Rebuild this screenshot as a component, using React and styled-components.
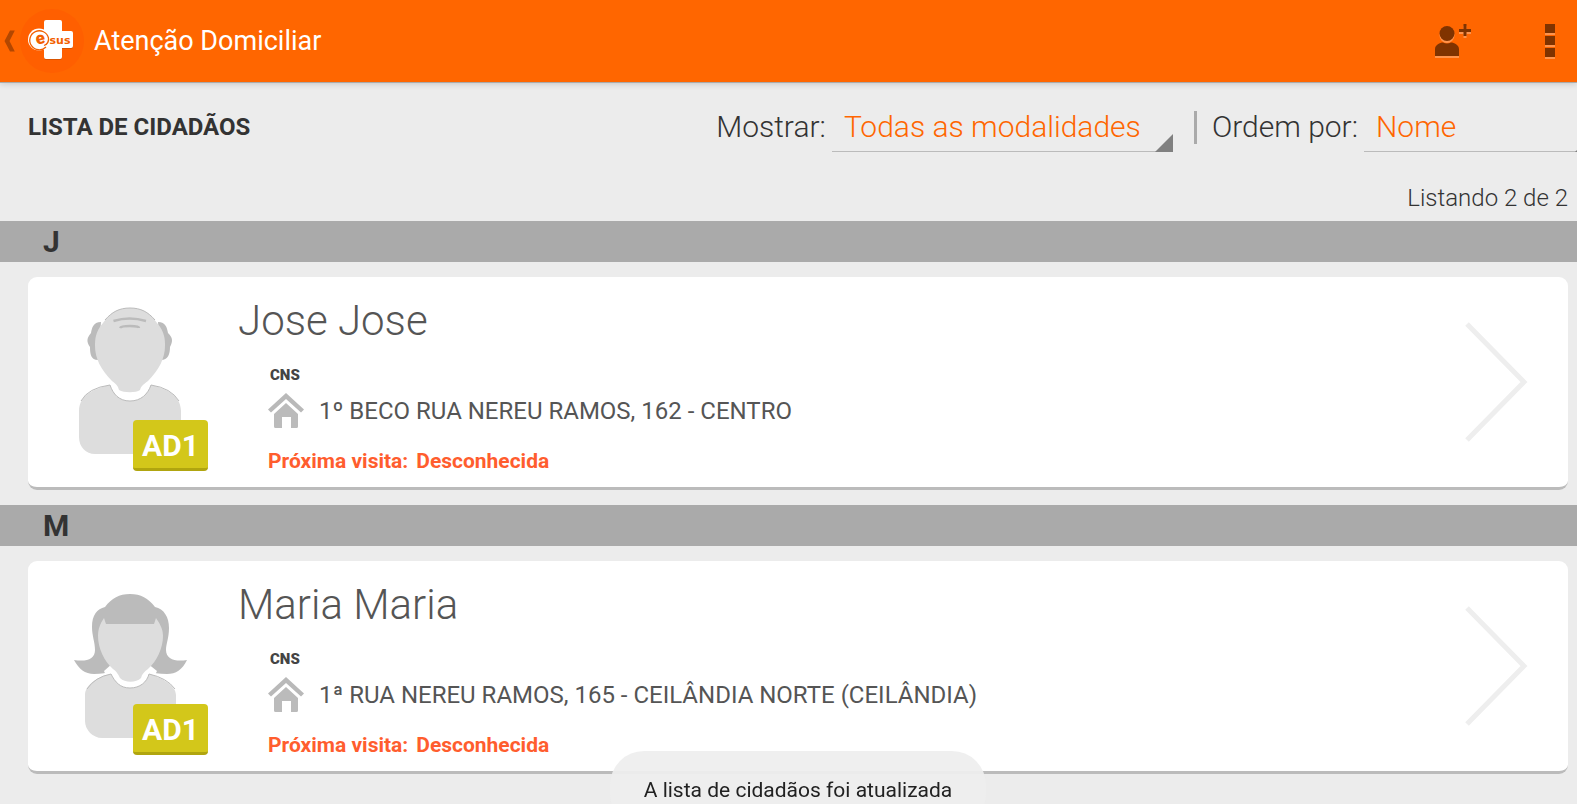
import React from "react";
import styled, { createGlobalStyle } from "styled-components";

const GlobalStyle = createGlobalStyle`
  *, *::before, *::after { box-sizing: border-box; }
  body {
    margin: 0;
    background: #ececec;
    color: #333;
    font-family: Roboto, "Liberation Sans", sans-serif;
  }
  h1, h2, h3, p, ul { margin: 0; padding: 0; }
  button, select { font: inherit; }
`;

const Page = styled.div`
  min-height: 100vh;
  overflow-x: clip;
`;

const AppBar = styled.header`
  display: flex;
  align-items: center;
  height: 82px;
  background: #ff6600;
  box-shadow: 0 1px 0 #aaa, 0 2px 6px rgba(0, 0, 0, 0.16);
`;

const HomeButton = styled.button`
  display: flex;
  align-items: center;
  padding: 0;
  border: 0;
  background: none;
`;

const BarTitle = styled.h1`
  flex: 1;
  margin-left: 10px;
  color: #fff;
  font-size: 27px;
  font-weight: 400;
  line-height: 32px;
`;

const BarAction = styled.button`
  display: flex;
  align-items: center;
  justify-content: center;
  width: ${(p) => p.$width};
  height: 80px;
  padding: 0;
  border: 0;
  background: none;
`;

const BarActions = styled.div`
  display: flex;
  gap: 22px;
`;

const Toolbar = styled.section`
  display: flex;
  justify-content: space-between;
  align-items: center;
  padding: 20px 0 0 28px;
`;

const PageTitle = styled.h2`
  color: #333;
  font-size: 24px;
  font-weight: 700;
  line-height: 50px;
  white-space: nowrap;
`;

const Filters = styled.div`
  display: flex;
  align-items: center;
  margin-right: -16px;
`;

const Field = styled.label`
  display: flex;
  align-items: center;
  gap: 6px;
  font-size: 30px;
  font-weight: 300;
  line-height: 50px;
  white-space: nowrap;
`;

const SpinnerBox = styled.span`
  position: relative;
  display: flex;
  width: ${(p) => p.$width};
  border-bottom: 1px solid #bbb;

  &::after {
    content: "";
    position: absolute;
    right: 0;
    bottom: -1px;
    border-left: 18px solid transparent;
    border-bottom: 18px solid #808080;
    pointer-events: none;
  }
`;

const Spinner = styled.select`
  appearance: none;
  width: 100%;
  height: 49px;
  padding: 0 12px;
  border: 0;
  background: none;
  color: #ff6600;
`;

const Divider = styled.span`
  width: 3px;
  height: 33px;
  margin: 0 15px 0 21px;
  background: #aaa;
`;

const Count = styled.p`
  padding: 28px 9px 5px;
  font-size: 24px;
  font-weight: 300;
  line-height: 36px;
  text-align: right;
`;

const GroupHeader = styled.h2`
  padding: 1px 0 0 43px;
  background: #aaa;
  color: #333;
  font-size: 30px;
  font-weight: 700;
  line-height: 40px;
`;

const GroupList = styled.ul`
  padding: 15px 9px 15px 28px;
  list-style: none;
`;

const Card = styled.a`
  display: flex;
  align-items: center;
  height: 213px;
  padding-right: 40px;
  border-bottom: 3px solid #bbb;
  border-radius: 9px;
  background: #fff;
  color: #555;
  text-decoration: none;
`;

const Portrait = styled.div`
  position: relative;
  align-self: stretch;
  width: 210px;
  padding: 27px 0 0 44px;
`;

const Badge = styled.span`
  position: absolute;
  left: 105px;
  top: 143px;
  width: 75px;
  height: 51px;
  border-bottom: 3px solid #b0a50f;
  border-radius: 4px;
  background: #d3c71a;
  color: #fff;
  font-size: 30px;
  font-weight: 700;
  line-height: 52px;
  text-align: center;
`;

const Details = styled.div`
  flex: 1;
  align-self: stretch;
  padding-top: 18px;
`;

const Name = styled.h3`
  font-size: 42px;
  font-weight: 300;
  line-height: 52px;
`;

const Facts = styled.div`
  display: flex;
  flex-direction: column;
  padding: 18px 0 0 30px;
`;

const Cns = styled.p`
  padding-left: 2px;
  color: #444;
  font-size: 15px;
  font-weight: 900;
  line-height: 20px;
`;

const Address = styled.p`
  display: flex;
  align-items: center;
  gap: 15px;
  padding-top: 6px;
  font-size: 24px;
  line-height: 40px;
`;

const NextVisit = styled.p`
  display: flex;
  gap: 8px;
  padding-top: 17px;
  color: #ff5d2e;
  font-size: 21px;
  font-weight: 700;
  line-height: 26px;
`;

const ToastArea = styled.div`
  position: fixed;
  left: 28px;
  right: 9px;
  bottom: -24px;
  display: flex;
  justify-content: center;
  pointer-events: none;
`;

const Toast = styled.div`
  padding: 1px 34px 0;
  border-radius: 34px;
  background: rgba(238, 238, 238, 0.94);
  color: #222;
  font-size: 21px;
  line-height: 76px;
  white-space: nowrap;
`;

function BackIcon() {
  return (
    <svg width="20" height="80" viewBox="0 0 20 80" aria-hidden="true">
      <path d="M10 29.500h4.800L9.500 40l5.300 10.500H10L4.500 40z" fill="#b34700" />
    </svg>
  );
}

function Logo() {
  return (
    <svg width="64" height="64" viewBox="20 8 64 64" aria-hidden="true">
      <circle cx="52" cy="40" r="32" fill="#ff5f00" />
      <path d="M46 20h14a2 2 0 0 1 2 2v9h9a2 2 0 0 1 2 2v13a2 2 0 0 1-2 2h-9v9a2 2 0 0 1-2 2H46a2 2 0 0 1-2-2V21a2 2 0 0 1 2-2z" fill="#b34700" opacity=".5" />
      <path d="M46 19h14a2 2 0 0 1 2 2v9h9a2 2 0 0 1 2 2v13a2 2 0 0 1-2 2h-9v9a2 2 0 0 1-2 2H46a2 2 0 0 1-2-2V21a2 2 0 0 1 2-2z" fill="#fff" />
      <circle cx="39" cy="38.500" r="11" fill="#fff" />
      <path d="M46 46a9.500 9.500 0 1 1 2.500-9c.4 4-1.500 6.500-4.500 7.500" fill="none" stroke="#f26000" strokeWidth="1.300" />
      <text x="35.500" y="43" fontSize="17" fontWeight="900" fill="#f26000" fontFamily="Roboto, sans-serif" transform="rotate(-12 40 38)">e</text>
      <text x="49.500" y="42.500" fontSize="11" fontWeight="700" fill="#f26000" fontFamily="'DejaVu Sans', sans-serif">sus</text>
    </svg>
  );
}

function AddPersonIcon() {
  const shape = (
    <>
      <circle cx="12" cy="9.500" r="7.500" />
      <path d="M0 32v-7c0-4 5-6.500 8-6.500q4 2 8 0c3 0 8 2.500 8 6.500v7z" />
      <path d="M28.500 0h3v5H36v3h-4.500v4h-3V8H24V5h4.500z" />
    </>
  );
  return (
    <svg width="36" height="35" viewBox="0 0 36 35" aria-hidden="true">
      <g fill="#ff944d" transform="translate(0 2)">{shape}</g>
      <g fill="#803300">{shape}</g>
    </svg>
  );
}

function MoreIcon() {
  return (
    <svg width="10" height="35" viewBox="0 0 10 35" aria-hidden="true">
      <path d="M0 2h10v9H0zM0 14h10v9H0zM0 26h10v9H0z" fill="#ff944d" />
      <path d="M0 0h10v9H0zM0 12h10v9H0zM0 24h10v9H0z" fill="#803300" />
    </svg>
  );
}

function HouseIcon() {
  return (
    <svg width="36" height="36" viewBox="0 0 36 36" aria-hidden="true">
      <path d="M18 0l18 16.500-3 3L18 6 3 19.500l-3-3z" fill="#b9b9b9" />
      <path d="M18 10l12 11v12.500q0 1.500-1.500 1.500H23V24h-9v11H7.500Q6 35 6 33.500V21z" fill="#bbb" />
    </svg>
  );
}

function ManAvatar() {
  return (
    <svg width="120" height="152" viewBox="72 304 120 152" aria-hidden="true">
      <path d="M101 322c-8 0-9 6-10 11-4 5-5 8-1 14 0 7 1 13 8 13zM158 322c8 0 9 6 10 11 5 5 5 8 2 14 0 7-2 13-9 13z" fill="#bbb" />
      <path d="M95 346c0-6 0-14 8-23 7-10 15-15 27-15s20 5 27 15c8 9 8 17 8 23 0 12-6 24-17 35-5 4-7 5-8 9-4 3-16 3-21 0-1-4-2-5-7-9-11-11-17-23-17-35z" fill="#ddd" />
      <path d="M105 320c7-8 14-12 25-12s18 4 25 12" fill="none" stroke="#bbb" />
      <path d="M113.500 321q16-5 32.500 0M120 328q1-2 10-2t9 2" fill="none" stroke="#bbb" strokeWidth="2.500" />
      <path d="M110 385c3 9 9 16 20 16s18-7 21-16c12 3 30 9 30 26v26c0 10-7 17-16 17H95c-9 0-16-7-16-17v-26c0-17 18-23 31-26z" fill="#ddd" />
      <path d="M81 401q7-13 29-16c3 9 9 16 20 16s18-7 21-16q20 3 28 16" fill="none" stroke="#bbb" />
    </svg>
  );
}

function WomanAvatar() {
  return (
    <svg width="120" height="152" viewBox="72 588 120 152" aria-hidden="true">
      <path d="M74 660c13 2 21-1 21-10 0-8-3-14-3-23 0-12 5-18 13-20 7-9 14-13 25-13s18 4 25 13c9 2 14 10 14 21 0 10-3 16-3 22 0 9 9 12 21 10-5 10-11 14-20 14-8 0-14-1-20-4l-34 0c-6 3-12 4-19 4-9 0-15-5-20-14z" fill="#bbb" />
      <path d="M104 671l9-8h34l10 8-9 18h-36z" fill="#fff" />
      <path d="M98 636c0-7 2-12 6-18l2 6h48l2-6c4 6 7 11 7 18 0 12-6 25-15 33-4 3-6 5-7 9-5 5-16 5-21 0-2-4-3-6-7-9-9-8-15-21-15-33z" fill="#ddd" />
      <path d="M111 674c4 8 9 14 19 14s17-6 19-14c11 3 27 11 27 21v26c0 10-8 17-17 17h-57c-9 0-17-8-17-17v-26c0-10 13-19 26-21z" fill="#ddd" />
      <path d="M87 689q8-12 24-15c4 8 9 14 19 14s17-6 19-14q18 4 26 15" fill="none" stroke="#bbb" />
    </svg>
  );
}

function Chevron() {
  return (
    <svg width="64" height="120" viewBox="0 0 64 120" aria-hidden="true">
      <path d="M3 2l57 58L3 118" fill="none" stroke="#eee" strokeWidth="5" />
    </svg>
  );
}

function CitizenCard({ name, address, modality, visit, Avatar }) {
  return (
    <Card href="#cidadao">
      <Portrait>
        <Avatar />
        <Badge>{modality}</Badge>
      </Portrait>
      <Details>
        <Name>{name}</Name>
        <Facts>
          <Cns>CNS</Cns>
          <Address>
            <HouseIcon />
            {address}
          </Address>
          <NextVisit>
            <span>Próxima visita:</span>
            <span>{visit}</span>
          </NextVisit>
        </Facts>
      </Details>
      <Chevron />
    </Card>
  );
}

const groups = [
  {
    letter: "J",
    citizens: [
      {
        name: "Jose Jose",
        address: "1º BECO RUA NEREU RAMOS, 162 - CENTRO",
        modality: "AD1",
        visit: "Desconhecida",
        Avatar: ManAvatar,
      },
    ],
  },
  {
    letter: "M",
    citizens: [
      {
        name: "Maria Maria",
        address: "1ª RUA NEREU RAMOS, 165 - CEILÂNDIA NORTE (CEILÂNDIA)",
        modality: "AD1",
        visit: "Desconhecida",
        Avatar: WomanAvatar,
      },
    ],
  },
];

export default function App() {
  return (
    <Page>
      <GlobalStyle />
      <AppBar>
        <HomeButton type="button" aria-label="Voltar">
          <BackIcon />
          <Logo />
        </HomeButton>
        <BarTitle>Atenção Domiciliar</BarTitle>
        <BarActions>
          <BarAction type="button" aria-label="Adicionar cidadão" $width="96px">
            <AddPersonIcon />
          </BarAction>
          <BarAction type="button" aria-label="Mais opções" $width="54px">
            <MoreIcon />
          </BarAction>
        </BarActions>
      </AppBar>
      <main>
        <Toolbar>
          <PageTitle>LISTA DE CIDADÃOS</PageTitle>
          <Filters>
            <Field>
              Mostrar:
              <SpinnerBox $width="341px">
                <Spinner defaultValue="todas">
                  <option value="todas">Todas as modalidades</option>
                </Spinner>
              </SpinnerBox>
            </Field>
            <Divider />
            <Field>
              Ordem por:
              <SpinnerBox $width="229px">
                <Spinner defaultValue="nome">
                  <option value="nome">Nome</option>
                </Spinner>
              </SpinnerBox>
            </Field>
          </Filters>
        </Toolbar>
        <Count>Listando 2 de 2</Count>
        {groups.map((group) => (
          <section key={group.letter}>
            <GroupHeader>{group.letter}</GroupHeader>
            <GroupList>
              {group.citizens.map((citizen) => (
                <li key={citizen.name}>
                  <CitizenCard {...citizen} />
                </li>
              ))}
            </GroupList>
          </section>
        ))}
      </main>
      <ToastArea>
        <Toast role="status">A lista de cidadãos foi atualizada</Toast>
      </ToastArea>
    </Page>
  );
}
